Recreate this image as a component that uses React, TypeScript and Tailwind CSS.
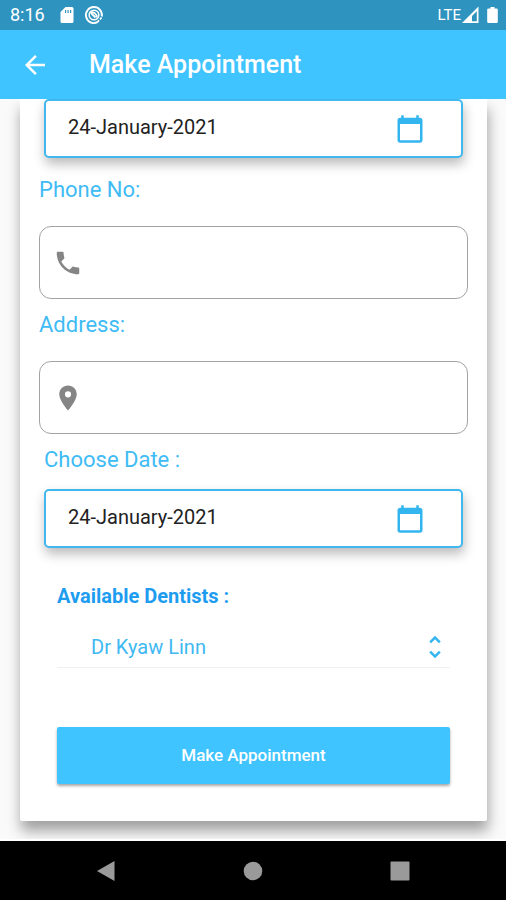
import { useState } from "react";
import type { ReactNode } from "react";
import {
  MdArrowBack,
  MdCalendarToday,
  MdLocationOn,
  MdPhone,
  MdUnfoldMore,
} from "react-icons/md";

const dentists = ["Dr Kyaw Linn"];

function StatusBar() {
  return (
    <div className="flex h-[30px] items-center justify-between bg-[#2f93bf] pr-2 pl-[10px] text-white">
      <div className="flex items-center">
        <span className="text-[18px] leading-5">8:16</span>
        <svg viewBox="0 0 14 18" className="ml-[15px] h-[18px] w-[14px]" fill="currentColor">
          <path
            fillRule="evenodd"
            d="M5.500 1H12a1.500 1.500 0 0 1 1.500 1.500v13A1.500 1.500 0 0 1 12 17H2a1.500 1.500 0 0 1-1.500-1.500V6zM5 4v3h1.200V4zM7.500 4v3h1.200V4zM10 4v3h1.200V4z"
          />
        </svg>
        <svg viewBox="0 0 20 20" className="ml-[10px] size-5" fill="none" stroke="currentColor">
          <path d="M13.500 17.200A8 8 0 1 1 17.800 11.500" strokeWidth="1.900" />
          <path d="M13.500 17.200l1.500-2M16 14.500l1.500-2" strokeWidth="1.800" />
          <circle cx="10" cy="10" r="4.800" strokeWidth="1.600" />
          <path d="M6.500 7.500c3-1 6 1 6.500 5" strokeWidth="1.800" />
          <path d="M7 8l4.500 4.500" strokeWidth="1.800" />
        </svg>
      </div>
      <div className="flex items-center">
        <span className="text-[15px] leading-5">LTE</span>
        <svg viewBox="0 0 18 18" className="ml-px size-[18px]" fill="currentColor">
          <path fillRule="evenodd" d="M0 17L16.500 0.500V17zM10 10v5.200h4.800V5.200z" />
        </svg>
        <svg viewBox="0 0 11 18" className="ml-[7px] h-[18px] w-[11px]" fill="currentColor">
          <path d="M3.500 1h4v1.500H9.500a1.300 1.300 0 0 1 1.300 1.300v11.900A1.300 1.300 0 0 1 9.500 17h-8A1.300 1.300 0 0 1 .2 15.700V3.800A1.300 1.300 0 0 1 1.500 2.500h2z" />
        </svg>
      </div>
    </div>
  );
}

function DateField({ id, label }: { id: string; label: string }) {
  const [date, setDate] = useState("24-January-2021");

  return (
    <div className="mx-[5px] flex h-[59px] items-center rounded-[5px] border-2 border-[#40b8ee] bg-white pr-9 pl-[22px] shadow-[1px_6px_12px_rgba(0,0,0,0.27)]">
      <input
        id={id}
        aria-label={label}
        value={date}
        onChange={(e) => setDate(e.target.value)}
        className="min-w-0 flex-1 bg-transparent pb-1 text-[20px] leading-6 text-[#222] outline-none"
      />
      <button type="button" aria-label="Open calendar" className="text-[#33b5f0]">
        <MdCalendarToday size={30} />
      </button>
    </div>
  );
}

function TextField({ id, type, icon }: { id: string; type: string; icon: ReactNode }) {
  return (
    <div className="mt-[23px] flex h-[73px] items-center gap-3 rounded-xl border border-[#a3a3a3] px-[13px] text-[#858585]">
      {icon}
      <input
        id={id}
        type={type}
        className="min-w-0 flex-1 bg-transparent text-[20px] text-[#222] outline-none"
      />
    </div>
  );
}

export default function App() {
  return (
    <div className="flex min-h-screen flex-col bg-white font-[Roboto,sans-serif]">
      <header className="relative z-10 bg-[#40c4ff] text-white">
        <StatusBar />
        <div className="flex h-[69px] items-center gap-[39px] px-5">
          <button type="button" aria-label="Back">
            <MdArrowBack size={30} />
          </button>
          <h1 className="pt-px text-[25px] leading-8 font-medium">Make Appointment</h1>
        </div>
      </header>

      <main className="flex-1 overflow-hidden border-b-2 border-white bg-[#fafafa] pr-[19px] pb-[18px] pl-5">
        <form
          onSubmit={(e) => e.preventDefault()}
          className="rounded-b-xs bg-white px-[19px] pb-[37px] shadow-[1px_10px_14px_rgba(0,0,0,0.36)]"
        >
          <DateField id="birthday" label="Date of birth" />

          <label
            htmlFor="phone"
            className="mt-[19px] block text-[22px] leading-[26px] text-[#40bbf5]"
          >
            Phone No:
          </label>
          <TextField id="phone" type="tel" icon={<MdPhone size={30} />} />

          <label
            htmlFor="address"
            className="mt-[13px] block text-[22px] leading-[26px] text-[#40bbf5]"
          >
            Address:
          </label>
          <TextField id="address" type="text" icon={<MdLocationOn size={30} />} />

          <label
            htmlFor="date"
            className="mx-[5px] mt-[13px] mb-4 block text-[22px] leading-[26px] text-[#40bbf5]"
          >
            Choose Date :
          </label>
          <DateField id="date" label="Appointment date" />

          <div className="mx-[18px] mt-9">
            <label
              htmlFor="dentist"
              className="block text-[20px] leading-6 font-bold text-[#1e9df0]"
            >
              Available Dentists :
            </label>
            <div className="mt-[19px] flex h-[41px] items-center border-b border-[#f0f0f0] text-[#40b8f2]">
              <select
                id="dentist"
                className="min-w-0 flex-1 appearance-none bg-transparent pl-[34px] text-[20px] leading-6 outline-none"
              >
                {dentists.map((name) => (
                  <option key={name}>{name}</option>
                ))}
              </select>
              <MdUnfoldMore size={30} className="pointer-events-none text-[#33b5f0]" />
            </div>
            <button
              type="submit"
              className="mt-[59px] h-[57px] w-full rounded-xs bg-[#40c4ff] text-[17px] font-medium text-white shadow-[0_2px_3px_rgba(0,0,0,0.35)]"
            >
              Make Appointment
            </button>
          </div>
        </form>
      </main>

      <nav className="flex h-[59px] items-center justify-around bg-black px-8 text-[#9a9a9a]">
        <button type="button" aria-label="Back">
          <svg viewBox="0 0 20 20" className="size-5" fill="currentColor">
            <path d="M1 10L18.500 0v20z" />
          </svg>
        </button>
        <button type="button" aria-label="Home">
          <svg viewBox="0 0 20 20" className="size-5" fill="currentColor">
            <circle cx="10" cy="10" r="9.300" />
          </svg>
        </button>
        <button type="button" aria-label="Recent apps">
          <svg viewBox="0 0 20 20" className="size-5" fill="currentColor">
            <rect x="0.500" y="0.500" width="19" height="19" rx="1" />
          </svg>
        </button>
      </nav>
    </div>
  );
}
